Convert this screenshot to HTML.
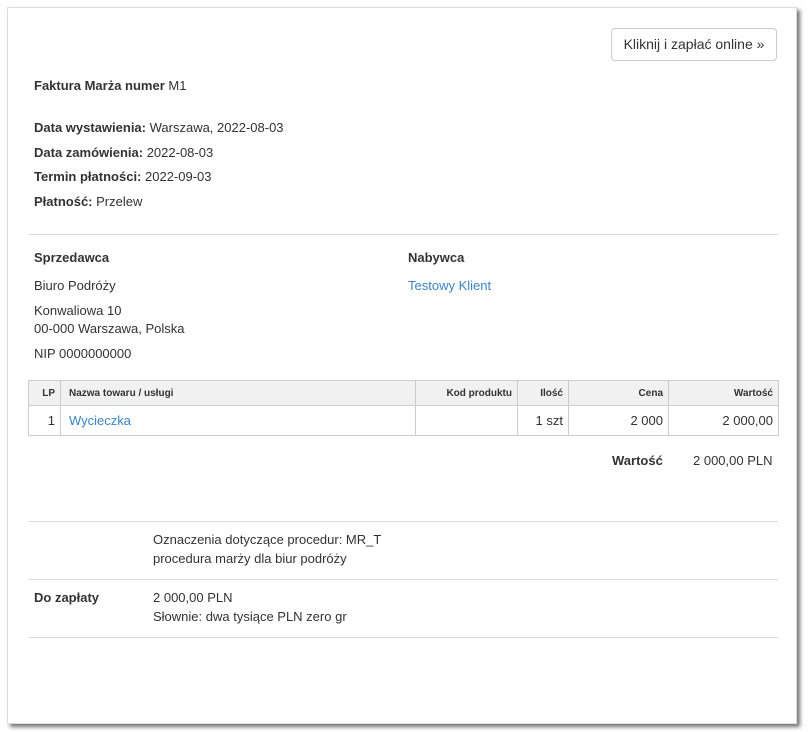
<!DOCTYPE html>
<html><head><meta charset="utf-8"><style>
body{margin:0;width:808px;height:732px;background:#fff;font-family:"Liberation Sans",Arial,sans-serif;font-size:13px;color:#333;position:relative;overflow:hidden}
.card{position:absolute;left:7px;top:7px;width:790px;height:717px;background:#fff;border:1px solid #ddd;box-sizing:border-box;box-shadow:3px 3px 4px rgba(0,0,0,.55)}
.t{position:absolute;white-space:nowrap;line-height:16px}
b{font-weight:bold}
a{color:#3a84c5;text-decoration:none}
.hr{position:absolute;left:28px;width:750px;height:1px;background:#ddd}
.btn{position:absolute;left:611px;top:28px;width:166px;height:33px;border:1px solid #ccc;border-radius:4px;box-sizing:border-box;font-size:14px;line-height:31px;text-align:center;color:#333}
table{position:absolute;left:28px;top:380px;width:751px;border-collapse:collapse}
td,th{border:1px solid #ccc;padding:0 5px}
th{background:#f1f1f1;font-size:10px;font-weight:bold;height:24px;text-align:right}
td{height:29px;font-size:13px;text-align:right}
.nm{padding-left:8px}
</style></head><body>
<div class="card"></div>
<div class="btn">Kliknij i zapłać online »</div>
<div class="t" style="left:34px;top:78px"><b>Faktura Marża numer</b> M1</div>
<div class="t" style="left:34px;top:120px"><b>Data wystawienia:</b> Warszawa, 2022-08-03</div>
<div class="t" style="left:34px;top:145px"><b>Data zamówienia:</b> 2022-08-03</div>
<div class="t" style="left:34px;top:169px"><b>Termin płatności:</b> 2022-09-03</div>
<div class="t" style="left:34px;top:194px"><b>Płatność:</b> Przelew</div>
<div class="hr" style="top:234px"></div>
<div class="t" style="left:34px;top:250px"><b>Sprzedawca</b></div>
<div class="t" style="left:34px;top:278px">Biuro Podróży</div>
<div class="t" style="left:34px;top:303px">Konwaliowa 10</div>
<div class="t" style="left:34px;top:321px">00-000 Warszawa, Polska</div>
<div class="t" style="left:34px;top:346px">NIP 0000000000</div>
<div class="t" style="left:408px;top:250px"><b>Nabywca</b></div>
<div class="t" style="left:408px;top:278px"><a>Testowy Klient</a></div>
<table>
<tr><th style="width:21px">LP</th><th class="nm" style="text-align:left;width:341px">Nazwa towaru / usługi</th><th style="width:91px">Kod produktu</th><th style="width:40px">Ilość</th><th style="width:89px">Cena</th><th>Wartość</th></tr>
<tr><td>1</td><td class="nm" style="text-align:left"><a>Wycieczka</a></td><td></td><td>1 szt</td><td>2 000</td><td>2 000,00</td></tr>
</table>
<div class="t" style="left:612px;top:453px"><b>Wartość</b></div>
<div class="t" style="left:693px;top:453px">2 000,00 PLN</div>
<div class="hr" style="top:521px"></div>
<div class="t" style="left:153px;top:532px">Oznaczenia dotyczące procedur: MR_T</div>
<div class="t" style="left:153px;top:551px">procedura marży dla biur podróży</div>
<div class="hr" style="top:579px"></div>
<div class="t" style="left:34px;top:590px"><b>Do zapłaty</b></div>
<div class="t" style="left:153px;top:590px">2 000,00 PLN</div>
<div class="t" style="left:153px;top:609px">Słownie: dwa tysiące PLN zero gr</div>
<div class="hr" style="top:637px"></div>
</body></html>
